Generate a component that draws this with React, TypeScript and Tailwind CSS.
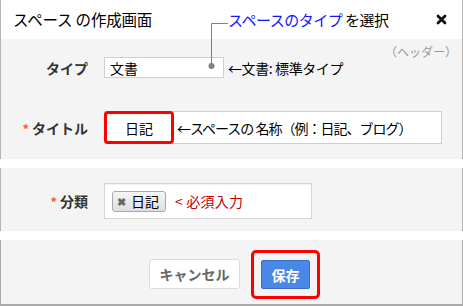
import React from 'react';

const font = { fontFamily: '"Noto Sans CJK JP", "Noto Sans", sans-serif' };

const Req = () => <span className="self-start mt-[1px] mr-[3px] text-[13px] leading-none font-bold text-[#ff5a2a]">*</span>;

const App = () => {
  return (
    <div className="relative w-[463px] h-[306px] bg-white text-black flex flex-col" style={font}>
      {/* Header */}
      <header className="h-[39px] flex items-center pl-3 pr-[15px] border-x border-[#b4b4b4] bg-white">
        <div className="w-[215px] text-[15.5px] leading-none tracking-[-0.2px]">スペース の作成画面</div>
        <div className="text-[15px] leading-none tracking-[-0.5px]">
          <span className="text-[#1414ff]">スペースのタイプ</span> を選択
        </div>
        <svg className="ml-auto" width="11" height="11" viewBox="0 0 11 11">
          <path d="M2 2 L9 9 M9 2 L2 9" stroke="#111" strokeWidth="2.8" strokeLinecap="round" />
        </svg>
      </header>

      {/* Main form */}
      <section className="h-[120px] bg-[#f4f4f4] border-x border-[#b4b4b4] pt-[18px] flex flex-col">
        <div className="flex items-center h-[21px]">
          <div className="w-[87px] flex justify-end text-[14px] font-bold text-[#333] leading-none">タイプ</div>
          <div className="ml-4 w-[120px] h-[21px] bg-white border border-[#cfcfcf] flex items-center pl-[5px] text-[14px] leading-none">文書</div>
          <div className="ml-[4px] text-[14px] leading-none tracking-[-0.4px]">←文書: 標準タイプ</div>
        </div>
        <div className="flex items-center h-[33px] mt-[33px]">
          <div className="w-[87px] flex justify-end items-center text-[14px] font-bold text-[#333] leading-none">
            <Req />
            タイトル
          </div>
          <div className="ml-4 w-[338px] h-[33px] bg-white border border-[#cfcfcf] flex items-stretch">
            <div className="-my-px -ml-px w-[70px] border-[3px] border-[#ff0000] rounded-[4px] flex items-center justify-center text-[14px] leading-none">日記</div>
            <div className="ml-[3px] flex items-center text-[14px] leading-none tracking-[-1px]">←スペースの 名称（例：日記、ブログ）</div>
          </div>
        </div>
        {/* annotation */}
        <div className="absolute left-[385px] top-[46px] text-[12px] text-[#999] leading-none">（ヘッダー）</div>
      </section>

      <div className="h-[9px] bg-white" />

      {/* Category */}
      <section className="h-[63px] bg-[#f4f4f4] border-x border-[#b4b4b4] pt-[15px]">
        <div className="flex items-center h-[36px]">
          <div className="w-[87px] flex justify-end items-center text-[14px] font-bold text-[#333] leading-none">
            <Req />
            分類
          </div>
          <div className="ml-4 w-[208px] h-[36px] bg-white border border-[#d6d6d6] shadow-[inset_0_1px_1px_rgba(0,0,0,0.06)] flex items-center pl-[7px]">
            <div className="h-[21px] w-[54px] rounded-[3px] border border-[#aaa] bg-gradient-to-b from-[#f6f6f6] to-[#dedede] flex items-center pl-[4px] text-[14px] leading-none">
              <span className="text-[11px] font-bold text-[#666] mr-[5px]">✖</span>
              日記
            </div>
            <div className="ml-[9px] text-[14px] leading-none text-[#c00000] tracking-[0.2px]">&lt; 必須入力</div>
          </div>
        </div>
      </section>

      <div className="h-[9px] bg-white" />

      {/* Footer */}
      <footer className="flex-1 bg-[#f4f4f4] border-x border-b-2 border-[#aaa] flex justify-center items-start pt-[10px] pl-[6px]">
        <button className="mt-[9px] w-[91px] h-[30px] bg-white border border-[#dcdcdc] rounded-[3px] text-[14px] font-bold text-[#666] leading-none">キャンセル</button>
        <div className="ml-[11px] border-[3px] border-[#ff0000] rounded-[5px] p-[7px]">
          <button className="w-[49px] h-[29px] bg-[#4a88e8] border border-[#3a6ec8] rounded-[2px] text-[14px] font-bold text-white leading-none">保存</button>
        </div>
      </footer>

      {/* callout line */}
      <svg className="absolute left-0 top-0 pointer-events-none" width="463" height="306">
        <path d="M211.5 66 V23.5 H228" fill="none" stroke="#808080" strokeWidth="1" />
        <circle cx="211.5" cy="66" r="3" fill="#808080" />
      </svg>
    </div>
  );
};

export default App;
